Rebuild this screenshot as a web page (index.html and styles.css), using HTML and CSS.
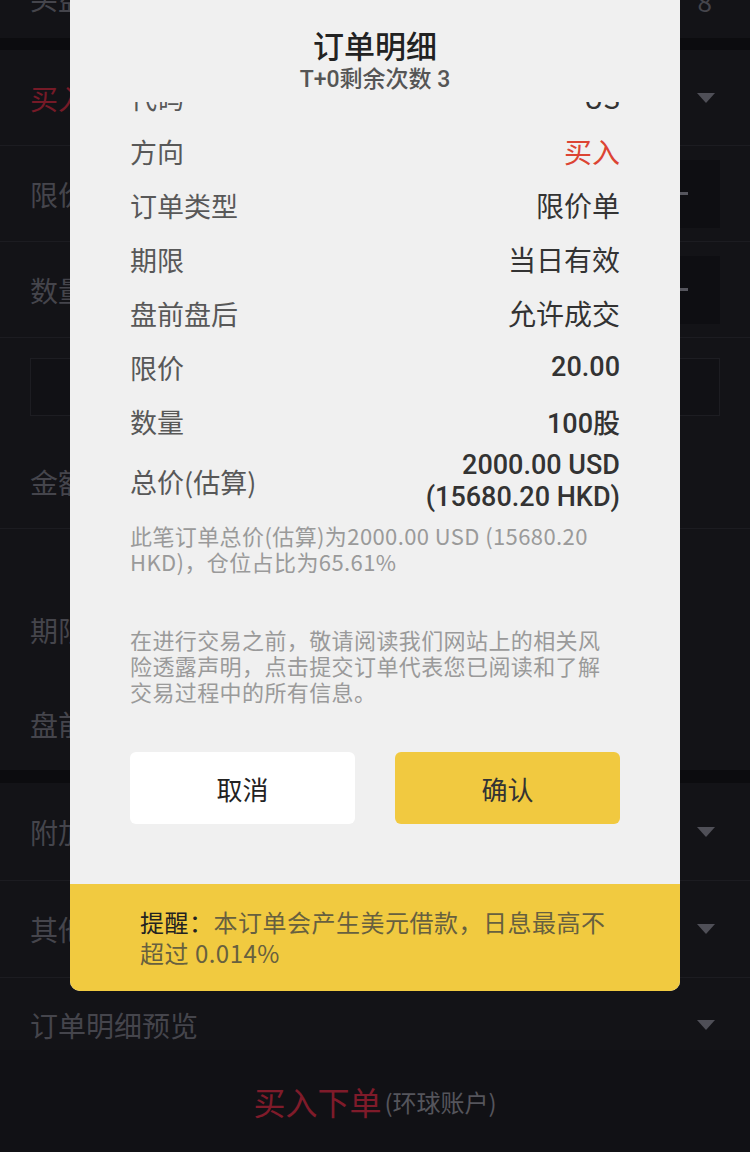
FILE: index.html
```html
<!DOCTYPE html>
<html lang="zh">
<head>
<meta charset="utf-8">
<title>订单明细</title>
<link rel="stylesheet" href="styles.css">
</head>
<body>
<div class="app">
  <div class="row row-top"><span class="lbl">买盘</span><span class="top-num">8</span></div>
  <div class="band"></div>
  <div class="row r95"><span class="lbl red">买入</span><span class="caret"></span></div>
  <div class="row r96 line"><span class="lbl">限价</span><div class="stepper"><span class="minus"></span></div></div>
  <div class="row r96 line"><span class="lbl">数量</span><div class="stepper"><span class="minus"></span></div></div>
  <div class="row r98 line"><div class="inputbox"></div></div>
  <div class="row r93"><span class="lbl">金额</span></div>
  <div class="row r150 line"><span class="lbl">期限</span></div>
  <div class="row r92"><span class="lbl">盘前盘后</span></div>
  <div class="band band2"></div>
  <div class="row r97"><span class="lbl">附加条件</span><span class="caret"></span></div>
  <div class="row r97 line"><span class="lbl">其他</span><span class="caret"></span></div>
  <div class="row rprev line"><span class="lbl">订单明细预览</span><span class="caret"></span></div>
  <div class="submit"><span class="sub-main">买入下单</span><span class="sub-acc">(环球账户)</span></div>
</div>

<div class="modal">
  <div class="m-head">
    <div class="m-title">订单明细</div>
    <div class="m-sub">T+0剩余次数 3</div>
  </div>
  <div class="m-scroll">
    <div class="m-inner">
      <div class="m-row"><span class="m-lbl">代码</span><span class="m-val">US</span></div>
      <div class="m-row"><span class="m-lbl">方向</span><span class="m-val buy">买入</span></div>
      <div class="m-row"><span class="m-lbl">订单类型</span><span class="m-val">限价单</span></div>
      <div class="m-row"><span class="m-lbl">期限</span><span class="m-val">当日有效</span></div>
      <div class="m-row"><span class="m-lbl">盘前盘后</span><span class="m-val">允许成交</span></div>
      <div class="m-row"><span class="m-lbl">限价</span><span class="m-val num">20.00</span></div>
      <div class="m-row"><span class="m-lbl">数量</span><span class="m-val num">100股</span></div>
      <div class="m-row m-total"><span class="m-lbl">总价(估算)</span><span class="m-val num total-val">2000.00 USD<br>(15680.20 HKD)</span></div>
      <p class="m-note">此笔订单总价(估算)为2000.00 USD (15680.20 HKD)，仓位占比为65.61%</p>
      <p class="m-disc">在进行交易之前，敬请阅读我们网站上的相关风险透露声明，点击提交订单代表您已阅读和了解交易过程中的所有信息。</p>
      <div class="m-btns">
        <button class="btn btn-cancel">取消</button>
        <button class="btn btn-ok">确认</button>
      </div>
    </div>
  </div>
  <div class="m-banner"><span class="b-key">提醒：</span>本订单会产生美元借款，日息最高不超过 0.014%</div>
</div>
</body>
</html>
```

FILE: styles.css
```css
* { box-sizing: border-box; }
html, body { margin: 0; padding: 0; }
body {
  width: 750px;
  height: 1152px;
  overflow: hidden;
  background: #121216;
  font-family: "Noto Sans CJK SC", "Noto Sans", sans-serif;
  position: relative;
}

/* ---------- dimmed background app ---------- */
.app { display: flex; flex-direction: column; }
.row {
  display: flex;
  align-items: center;
  justify-content: space-between;
  padding: 0 30px;
  background: #131317;
}
.line { border-top: 1px solid #1c1c21; }
.lbl { font-size: 28px; color: #45454c; line-height: 1; }
.lbl.red { color: #761a27; }
.row-top { height: 38px; align-items: flex-start; }
.row-top .lbl { margin-top: -16px; }
.top-num { font-size: 26px; color: #45454c; margin-top: -18px; margin-right: 8px; }
.band { height: 12px; background: #0c0c0f; }
.band2 { height: 13px; }
.r95 { height: 95px; }
.r96 { height: 96px; }
.r98 { height: 98px; }
.r93 { height: 93px; }
.r150 { height: 150px; padding-top: 52px; }
.r92 { height: 92px; }
.r97 { height: 97px; }
.rprev { height: 73px; padding-top: 22px; }
.caret {
  width: 0; height: 0;
  border-left: 9px solid transparent;
  border-right: 9px solid transparent;
  border-top: 10px solid #4f4f57;
  margin-right: 5px;
}
.stepper {
  width: 100px; height: 68px;
  background: #0e0e12;
  display: flex; align-items: center;
  padding-left: 52px;
}
.minus { width: 16px; height: 3px; background: #55555d; }
.inputbox {
  flex: 1; height: 58px;
  border: 1px solid #1d1d22;
  background: #111115;
}
.submit {
  height: 102px;
  display: flex; align-items: center; justify-content: center;
  gap: 3px;
  background: #111115;
}
.sub-main { font-size: 32px; color: #7f1b2a; }
.sub-acc { font-size: 24px; color: #55555c; }

/* ---------- modal ---------- */
.modal {
  position: absolute;
  left: 70px; top: 0;
  width: 610px;
  background: #f0f0f0;
  border-radius: 0 0 10px 10px;
  overflow: hidden;
}
.m-head { padding-top: 25px; padding-bottom: 7px; text-align: center; }
.m-title { font-size: 31px; line-height: 40px; color: #222; font-weight: 500; }
.m-sub { font-family: "Roboto", "Noto Sans CJK SC", sans-serif; font-size: 23px; line-height: 30px; color: #555; font-weight: 500; }
.m-scroll { overflow: hidden; }
.m-inner { margin-top: -32px; padding: 0 60px 60px; }
.m-row {
  height: 54px;
  display: flex; align-items: center; justify-content: space-between;
}
.m-lbl { font-size: 27px; color: #585858; }
.m-val { font-size: 28px; color: #333; text-align: right; }
.m-val.buy { color: #dc4433; }
.m-val.num { font-family: "Roboto", "Noto Sans CJK SC", sans-serif; font-weight: 500; font-size: 27px; }
.m-total { height: 66px; }
.total-val { line-height: 32px; }
.m-note, .m-disc {
  margin: 0;
  font-size: 22px;
  line-height: 26px;
  color: #9a9a9a;
  letter-spacing: 0.4px;
}
.m-note { margin-top: 8px; }
.m-disc { margin-top: 52px; }
.m-btns { margin-top: 48px; display: flex; justify-content: space-between; }
.btn {
  width: 225px; height: 72px;
  border: none; border-radius: 6px;
  font-family: "Noto Sans CJK SC", sans-serif;
  font-size: 26px; color: #222;
}
.btn-cancel { background: #fff; }
.btn-ok { background: #f1c940; color: #333; }
.m-banner {
  background: #f1ca40;
  padding: 22px 60px 23px 70px;
  font-size: 24px;
  line-height: 31px;
  letter-spacing: 0.5px;
  color: #67603f;
}
.b-key { color: #222; }
```
